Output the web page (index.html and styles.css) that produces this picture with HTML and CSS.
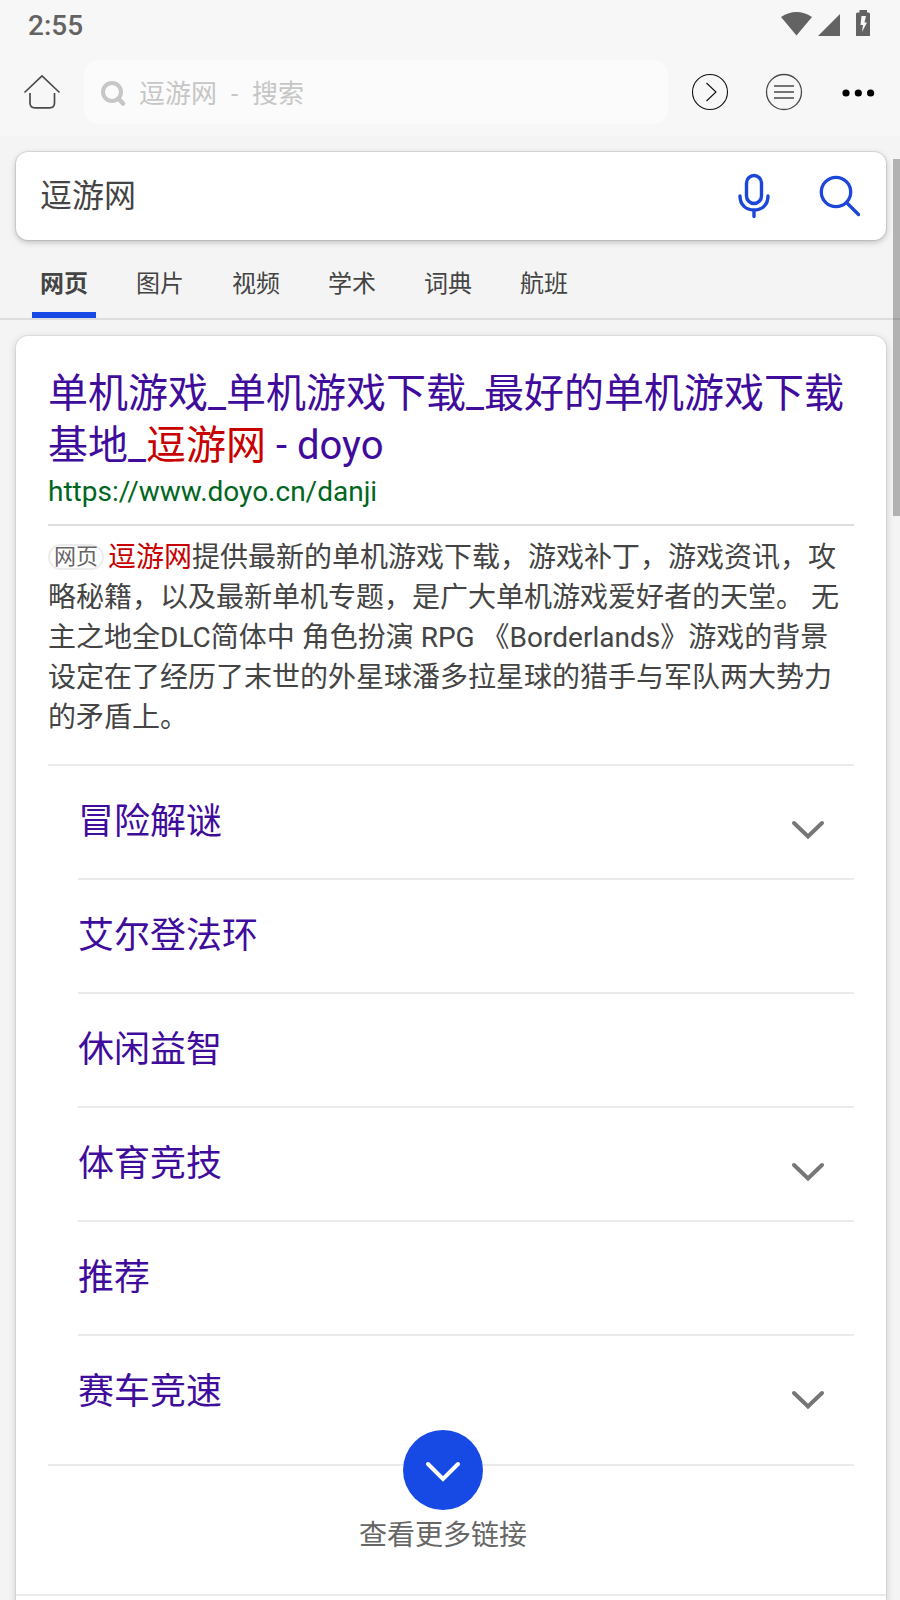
FILE: index.html
```html
<!DOCTYPE html>
<html lang="zh-CN">
<head>
<meta charset="utf-8">
<title>逗游网 - 搜索</title>
<link rel="stylesheet" href="styles.css">
</head>
<body>
<div class="screen">
  <header class="chrome">
    <div class="status">
      <span class="clock">2:55</span>
      <svg class="status-icons" width="92" height="28" viewBox="780 9 92 28" fill="#636363">
        <path d="M781 17Q796.5 7 812 17L796.5 35.5Z"/>
        <path d="M840 14V36H818Z"/>
        <path fill-rule="evenodd" d="M859.500 10H867V12.500H868.500Q870 12.500 870 14V36H856V14Q856 12.500 857.500 12.500H859.500ZM861.500 16L860.500 25H863L862 32L867 22.500H864.500L866 16Z"/>
      </svg>
    </div>
    <div class="toolbar">
      <svg class="home" width="38" height="36" viewBox="23 74 38 36" fill="none" stroke="#4a4a4a" stroke-width="1.700">
        <path d="M24.500 92.500L42 76L59.500 92.500M30 93V103Q30 107.800 35 107.800H49.500Q54.500 107.800 54.500 103V93"/>
      </svg>
      <div class="address">
        <svg width="26" height="26" viewBox="100 81 26 26" fill="none" stroke="#c6c6c6">
          <circle cx="112" cy="92" r="9" stroke-width="4"/><path d="M118.500 98.500L123 103.500" stroke-width="4.500" stroke-linecap="round"/>
        </svg>
        <span class="address-text">逗游网&nbsp; -&nbsp; 搜索</span>
      </div>
      <svg class="forward" width="38" height="38" viewBox="691 72.500 38 38" fill="none" stroke="#111" stroke-width="1.100">
        <circle cx="710" cy="91.500" r="17.500"/><path d="M706.500 82.500L716 91.500L706.500 100.500"/>
      </svg>
      <svg class="list" width="38" height="38" viewBox="765 72.500 38 38" fill="none" stroke="#4a4a4a" stroke-width="1.300">
        <circle cx="784" cy="91.500" r="17.500"/><path d="M774 85.500H794M774 91.500H794M774 97.500H794" stroke-width="1.500"/>
      </svg>
      <svg class="more" width="34" height="10" viewBox="841 88 34 10" fill="#000">
        <circle cx="846" cy="93" r="3.600"/><circle cx="858.300" cy="93" r="3.600"/><circle cx="870.600" cy="93" r="3.600"/>
      </svg>
    </div>
  </header>

  <form class="search">
    <span class="query">逗游网</span>
    <svg class="mic" width="34" height="46" viewBox="737 173 34 46" fill="none" stroke="#1c46d8" stroke-width="3.400" stroke-linecap="round">
      <rect x="746.500" y="175.500" width="15" height="28" rx="7.500"/><path d="M740 196C740 205 746 210 754 210S768 205 768 196M754 210V216.500"/>
    </svg>
    <svg class="glass" width="42" height="44" viewBox="819 174 42 44" fill="none" stroke="#1c46d8" stroke-width="3.300" stroke-linecap="round">
      <circle cx="836" cy="192" r="14.700"/><path d="M847 203L858.500 214.500"/>
    </svg>
  </form>

  <nav class="tabs">
    <a class="tab tab-active">网页</a><a class="tab">图片</a><a class="tab">视频</a><a class="tab">学术</a><a class="tab">词典</a><a class="tab">航班</a>
  </nav>

  <main class="card">
    <section class="result">
      <h2 class="title">单机游戏_单机游戏下载_最好的单机游戏下载<br>基地_<em>逗游网</em> - doyo</h2>
      <div class="url">https://www.doyo.cn/danji</div>
      <p class="snippet"><span class="tag">网页</span><em>逗游网</em>提供最新的单机游戏下载，游戏补丁，游戏资讯，攻<br>略秘籍，以及最新单机专题，是广大单机游戏爱好者的天堂。 无<br>主之地全DLC简体中 角色扮演 RPG 《Borderlands》游戏的背景<br>设定在了经历了末世的外星球潘多拉星球的猎手与军队两大势力<br>的矛盾上。</p>
      <ul class="links">
        <li class="link">冒险解谜<svg class="chevron" width="34" height="20" viewBox="0 0 34 20"><path d="M3 3L17 16.500L31 3"/></svg></li>
        <li class="link">艾尔登法环</li>
        <li class="link">休闲益智</li>
        <li class="link">体育竞技<svg class="chevron" width="34" height="20" viewBox="0 0 34 20"><path d="M3 3L17 16.500L31 3"/></svg></li>
        <li class="link">推荐</li>
        <li class="link">赛车竞速<svg class="chevron" width="34" height="20" viewBox="0 0 34 20"><path d="M3 3L17 16.500L31 3"/></svg></li>
      </ul>
      <div class="expand">
        <span class="expand-button"><svg width="36" height="22" viewBox="0 0 36 22"><path d="M3 3L18 18L33 3"/></svg></span>
        <span class="expand-label">查看更多链接</span>
      </div>
    </section>
  </main>
  <div class="scrollbar"></div>
</div>
</body>
</html>
```
FILE: styles.css
```css
* { box-sizing: border-box; }

body {
  margin: 0;
  background: #f4f4f4;
  color: #444;
  font-family: Roboto, "Noto Sans CJK SC", sans-serif;
}

svg { display: block; flex: none; }
em { color: #c80000; font-style: normal; }

.screen {
  position: relative;
  width: 900px;
  height: 1600px;
  overflow: hidden;
}

.chrome {
  height: 136px;
  background: #f7f7f7;
}

.status {
  display: flex;
  justify-content: space-between;
  height: 60px;
  padding: 9px 28px 0;
}

.clock {
  color: #636363;
  font-size: 28px;
  font-weight: 500;
  line-height: 33px;
}

.toolbar {
  display: flex;
  align-items: center;
  height: 64px;
  padding-left: 23px;
}

.address {
  display: flex;
  align-items: center;
  gap: 13px;
  width: 584px;
  height: 64px;
  margin-left: 23px;
  padding: 3px 0 0 16px;
  border-radius: 14px;
  background: #fbfbfb;
}

.address-text {
  color: #c6c6c6;
  font-size: 26px;
  line-height: 32px;
  white-space: pre;
  word-spacing: .5px;
}

.forward { margin: -1px 0 0 23px; }
.list { margin: -1px 0 0 36px; }
.more { margin: 2px 0 0 38px; }

.search {
  display: flex;
  align-items: center;
  width: 870px;
  height: 88px;
  margin: 16px 0 0 16px;
  padding: 0 25px 0 24px;
  border-radius: 12px;
  background: #fff;
  box-shadow: 0 0 0 1px rgba(0, 0, 0, .08), 0 2px 6px rgba(0, 0, 0, .24);
}

.query {
  flex: 1;
  font-size: 32px;
  line-height: 40px;
}

.glass { margin-left: 48px; }

.tabs {
  display: flex;
  height: 80px;
  padding: 20px 0 0 32px;
  gap: 32px;
  border-bottom: 2px solid #ddd;
}

.tab {
  width: 64px;
  height: 58px;
  padding-left: 8px;
  font-size: 24px;
  line-height: 48px;
}

.tab-active {
  border-bottom: 6px solid #174ae4;
  font-weight: 700;
}

.card {
  width: 870px;
  height: 1400px;
  margin: 16px 0 0 16px;
  border-radius: 12px;
  background: #fff;
  box-shadow: 0 0 0 1px rgba(0, 0, 0, .05), 0 2px 8px rgba(0, 0, 0, .18);
}

.result {
  height: 1260px;
  padding: 30px 32px 0;
  border-bottom: 2px solid #ebebeb;
}

.title {
  height: 104px;
  margin: 0;
  padding-top: 2px;
  color: #3f0c9c;
  font-size: 40px;
  font-weight: 400;
  line-height: 52px;
  white-space: nowrap;
}

.url {
  height: 56px;
  border-bottom: 2px solid #ddd;
  color: #006621;
  font-size: 28px;
  line-height: 44px;
}

.snippet {
  height: 238px;
  margin: 0;
  padding-top: 12px;
  font-size: 28px;
  line-height: 40px;
  white-space: nowrap;
}

.tag {
  display: inline-block;
  height: 26px;
  margin-right: 4px;
  padding: 0 4px;
  border: 2px solid #ececec;
  border-radius: 13px;
  color: #666;
  font-size: 22px;
  line-height: 21px;
  vertical-align: 3px;
}

.links {
  margin: 0;
  padding: 0 0 0 30px;
  border-top: 2px solid #ebebeb;
  list-style: none;
}

.link {
  display: flex;
  justify-content: space-between;
  height: 114px;
  padding: 33px 29px 0 0;
  border-bottom: 2px solid #ebebeb;
  color: #3f0c9c;
  font-size: 36px;
  line-height: 46px;
}

.link:last-child { border-bottom: 0; }

.chevron { margin-top: 21px; }

.chevron path {
  fill: none;
  stroke: #767676;
  stroke-width: 4;
  stroke-linecap: round;
}

.expand {
  display: flex;
  flex-direction: column;
  align-items: center;
  height: 130px;
  margin-top: 14px;
  padding-right: 16px;
  border-top: 2px solid #ebebeb;
}

.expand-button {
  display: flex;
  align-items: center;
  justify-content: center;
  width: 80px;
  height: 80px;
  margin-top: -36px;
  padding-top: 3px;
  border-radius: 50%;
  background: #174ae4;
}

.expand-button path {
  fill: none;
  stroke: #fff;
  stroke-width: 4;
  stroke-linecap: round;
}

.expand-label {
  margin-top: 6px;
  color: #666;
  font-size: 28px;
  line-height: 40px;
}

.scrollbar {
  position: absolute;
  top: 159px;
  right: 0;
  width: 7px;
  height: 357px;
  background: rgba(0, 0, 0, .27);
}
```
